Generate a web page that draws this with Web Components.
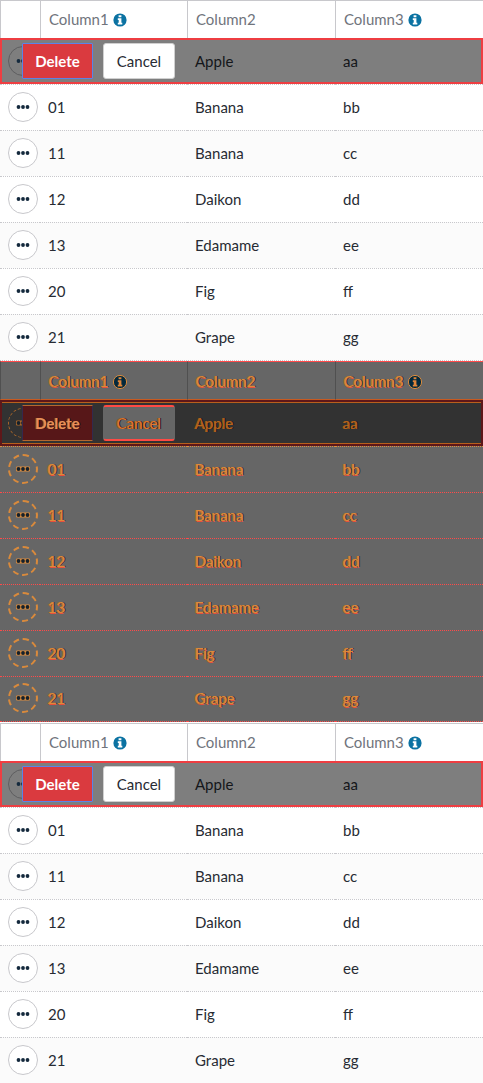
<!DOCTYPE html>
<html lang="en">
<head>
<meta charset="utf-8">
<meta name="viewport" content="width=device-width, initial-scale=1">
<title>Delete row confirmation</title>
<style>
  body { margin: 0; background: #fff; font-family: Lato, sans-serif; }
</style>
</head>
<body>
<fruit-grid></fruit-grid>
<fruit-grid diff></fruit-grid>
<fruit-grid last></fruit-grid>

<template id="info-tpl">
  <style>
    :host { display: inline-block; width: 14px; height: 14px; vertical-align: -2px; color: var(--info, #0b72a2); }
    svg { display: block; width: 100%; height: 100%; overflow: visible; }
  </style>
  <svg viewBox="0 0 14 14" role="img" aria-label="Info">
    <circle cx="7" cy="7" r="6.6" fill="currentColor" stroke="var(--ring, none)"/>
    <path fill="var(--glyph, #fff)" d="M5.6 2.2h2.8v2.1H5.6zM4.8 5.3h3.6v4.5h.9v1.6H4.8V9.8h.9V6.9h-.9z"/>
  </svg>
</template>

<template id="menu-tpl">
  <style>
    :host { display: block; }
    button { display: grid; place-items: center; width: 30px; height: 30px; padding: 0; border-radius: 50%;
      background: var(--menu-bg, #fff); border: var(--menu-border, 1px solid #c8c8cc); color: var(--dots, #14293d); }
    svg { display: block; width: 14px; height: 4px; overflow: visible; }
  </style>
  <button type="button" aria-label="Row actions">
    <svg viewBox="0 0 14 4" fill="currentColor"><rect x="0" y="-.4" width="14" height="4.8" rx="1" fill="var(--dots-line, none)"/><circle cx="2.5" cy="2" r="1.9"/><circle cx="7" cy="2" r="1.9"/><circle cx="11.5" cy="2" r="1.9"/></svg>
  </button>
</template>

<template id="confirm-tpl">
  <style>
    :host { display: flex; gap: 10px; }
    button { box-sizing: border-box; height: 36px; padding: 0; font: 15px/20px Lato, sans-serif; border-radius: 3px; text-shadow: inherit; }
    .delete { width: 71px; font-weight: 700; border-radius: 1px; background: var(--del-bg, #da3a3f); color: var(--del-fg, #fff); border: 1px solid var(--del-line, #5b84e8); border-inline-color: var(--del-side, #5b84e8); }
    .cancel { width: 72px; background: var(--can-bg, #fff); color: var(--can-fg, #272b33); border: 1px solid var(--can-side, #d0d0d0); border-block: var(--can-line, 1px solid #d0d0d0); }
  </style>
  <button type="button" class="delete">Delete</button>
  <button type="button" class="cancel">Cancel</button>
</template>

<template id="grid-tpl">
  <style>
    :host { display: block; --text: #272b33; --head: #70747c; --line: #c8c8cc; --sep: #c8c8cc; --odd: #fff; --even: #fbfbfb; --mask: #7e7e7e; --mask-line: #ee3e42; --mask-text: #14161a; }
    :host([diff]) {
      --text: #dd8a3c; --head: #dd8a3c; --line: #505050; --sep: #ff4a4a; --odd: #666; --even: #666;
      --mask: #323232; --mask-line: #5e1719; --mask-text: #b5651d;
      --info: #03293c; --ring: #d98a3c; --glyph: #e0853a;
      --menu-bg: #666; --menu-border: 2px dashed #d98a3c; --dots: #14202b; --dots-line: #d98a3c;
      --del-bg: #571718; --del-fg: #e98f58; --del-line: #b4682f; --del-side: #35294d;
      --can-bg: #666; --can-fg: #e0782f; --can-line: 2px solid #ff4a44; --can-side: #666;
      text-shadow: 1px 0 #2c3038, -1px 0 #c8782f, 0 1px #e8503a;
    }
    table { width: 100%; border-collapse: separate; border-spacing: 0; table-layout: fixed; color: var(--text); font-size: 15px; line-height: 20px; border-bottom: 1px dotted var(--sep); }
    :host([diff]) table { border-bottom: 1px solid #fff; }
    :host([last]) table { border-bottom: 0; }
    col.menu { width: 40px; }
    col.one { width: 147px; }
    col.two { width: 148px; }
    th, td { box-sizing: border-box; text-align: left; font-weight: 400; padding: 0 8px 2px; }
    th { height: 38px; background: var(--odd); color: var(--head); border-top: 1px solid var(--line); border-left: 1px solid var(--line); }
    :host([diff]) th { height: 39px; border-top-color: #ff4a4a; border-bottom: 1px solid #c85a20; padding-bottom: 0; }
    td { height: 46px; background: var(--odd); border-top: 1px dotted var(--sep); }
    tr:nth-child(odd) td { background: var(--even); }
    :host([diff]) tr:last-child td { border-bottom: 1px dotted #ff4a4a; }
    .pending td, tr.pending:nth-child(odd) td { background: var(--mask); color: var(--mask-text); border-block: 2px solid var(--mask-line); padding-bottom: 0; }
    .pending td:first-child { border-left: 2px solid var(--mask-line); padding-left: 6px; position: relative; }
    .pending td:last-child { border-right: 2px solid var(--mask-line); }
    .pending row-menu { --menu-bg: transparent; --menu-border: 1px solid #5e5e60; }
    :host([diff]) .pending { text-shadow: 1px 0 #14161a, -1px 0 #a85a1c; }
    :host([diff]) .pending td { box-shadow: inset 0 1px #b8601c, inset 0 -1px #b8601c; }
    :host([diff]) .pending + tr td { border-top-color: #e0903f; }
    :host([diff]) .pending row-menu { --menu-border: 1px dashed #a8662a; --dots-line: #a8662a; }
    confirm-delete { position: absolute; left: 20px; top: 3px; z-index: 1; }
  </style>
  <table>
    <colgroup><col class="menu"><col class="one"><col class="two"><col></colgroup>
    <thead><tr><th></th><th>Column1 <info-icon></info-icon></th><th>Column2</th><th>Column3 <info-icon></info-icon></th></tr></thead>
    <tbody></tbody>
  </table>
</template>

<script>
  const define = (name, id, setup) => customElements.define(name, class extends HTMLElement {
    constructor() {
      super();
      const root = this.attachShadow({ mode: 'open' });
      root.append(document.getElementById(id).content.cloneNode(true));
      if (setup) setup(root);
    }
  });
  const rows = [['', 'Apple', 'aa'], ['01', 'Banana', 'bb'], ['11', 'Banana', 'cc'], ['12', 'Daikon', 'dd'], ['13', 'Edamame', 'ee'], ['20', 'Fig', 'ff'], ['21', 'Grape', 'gg']];
  define('info-icon', 'info-tpl');
  define('row-menu', 'menu-tpl');
  define('confirm-delete', 'confirm-tpl');
  define('fruit-grid', 'grid-tpl', root => {
    const body = root.querySelector('tbody');
    rows.forEach((values, i) => {
      const tr = body.insertRow();
      const first = tr.insertCell();
      first.append(document.createElement('row-menu'));
      if (i === 0) {
        tr.className = 'pending';
        first.append(document.createElement('confirm-delete'));
      }
      values.forEach(v => { tr.insertCell().textContent = v; });
    });
  });
</script>
</body>
</html>
